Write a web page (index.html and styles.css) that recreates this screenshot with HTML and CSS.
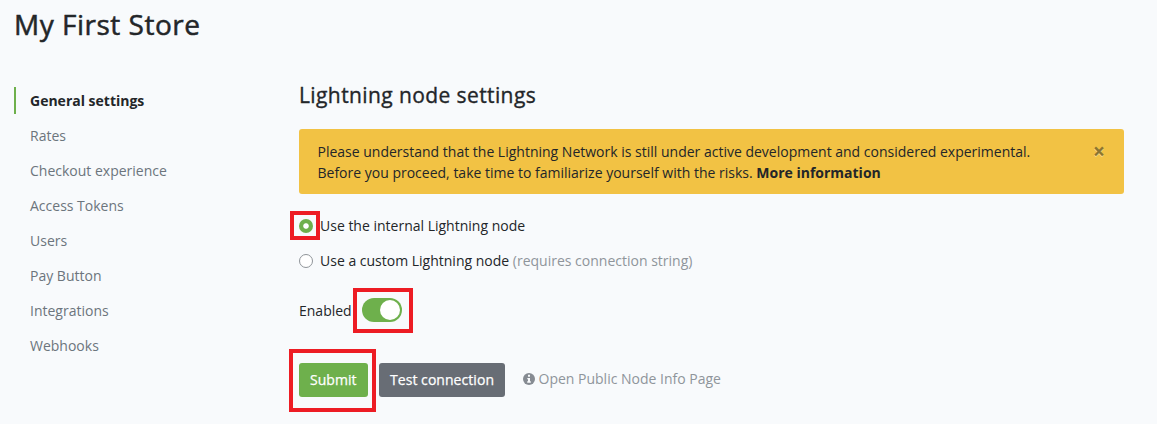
FILE: index.html
```html
<!DOCTYPE html>
<html lang="en">
<head>
<meta charset="utf-8">
<title>My First Store</title>
<link rel="stylesheet" href="styles.css">
</head>
<body>
<main class="page">
  <h1 class="title">My First Store</h1>
  <div class="columns">
    <nav class="nav">
      <a class="active">General settings</a>
      <a>Rates</a>
      <a>Checkout experience</a>
      <a>Access Tokens</a>
      <a>Users</a>
      <a>Pay Button</a>
      <a>Integrations</a>
      <a>Webhooks</a>
    </nav>
    <section class="content">
      <h2 class="subtitle">Lightning node settings</h2>
      <div class="alert">
        <p>Please understand that the Lightning Network is still under active development and considered experimental.<br>Before you proceed, take time to familiarize yourself with the risks. <b>More information</b></p>
        <span class="close">×</span>
      </div>
      <label class="option"><span class="radio checked"><span class="mark mark-radio"></span></span><span>Use the internal Lightning node</span></label>
      <label class="option"><span class="radio"></span><span>Use a custom Lightning node <span class="muted">(requires connection string)</span></span></label>
      <div class="enabled"><span>Enabled</span><span class="switch"><span class="mark mark-switch"></span></span></div>
      <div class="actions">
        <span class="btn submit">Submit<span class="mark mark-submit"></span></span>
        <span class="btn test">Test connection</span>
        <a class="info"><svg class="info-icon" viewBox="0 0 12 12"><circle cx="6" cy="6" r="6" fill="#868b92"/><path d="M5 1.800h2v2H5zM4.300 5H7v3.300h.8v1.400H4.200V8.300H5V6.300h-.7z" fill="#f8fafc"/></svg>Open Public Node Info Page</a>
      </div>
    </section>
  </div>
</main>
</body>
</html>
```
FILE: styles.css
```css
* { box-sizing: border-box; }
body { margin: 0; background: #f8fafc; color: #232629; font: 14px/21px "Open Sans", sans-serif; }
.page { height: 424px; padding: 8px 33px 0 14px; overflow: hidden; }
.title { margin: 0; font-size: 28px; line-height: 32px; font-weight: 400; letter-spacing: .5px; -webkit-text-stroke: .5px; }
.columns { display: flex; margin-top: 41px; }
.nav { width: 285px; flex: none; padding-top: 6px; }
.nav a { display: block; height: 27px; margin-bottom: 8px; padding: 3px 0 3px 16px; color: #6c757d; }
.nav .active { color: #232629; font-weight: 700; border-left: 2px solid #6eb04c; padding-left: 14px; }
.content { flex: 1; }
.subtitle { margin: 0 0 20px; font-size: 21px; line-height: 28px; font-weight: 400; letter-spacing: .4px; -webkit-text-stroke: .35px; }
.alert { display: flex; justify-content: space-between; height: 65px; padding: 12px 19px 0 18.500px; border-radius: 3px; background: #f2c244; }
.alert p { margin: 0; }
.close { font-size: 21px; font-weight: 700; color: #8c7532; text-shadow: 0 1px 0 #f9dd90; }
.option { display: flex; align-items: center; height: 21px; margin-top: 21px; }
.option + .option { margin-top: 14px; }
.radio { position: relative; width: 14px; height: 14px; margin-right: 7px; border: 1px solid #8f9499; border-radius: 50%; background: #fff; }
.radio.checked { border: 0; background: radial-gradient(circle, #fff 2.300px, #6eb04c 3.200px); }
.muted { color: #8f959b; }
.enabled { display: flex; align-items: center; height: 24px; margin-top: 27px; }
.switch { position: relative; width: 40px; height: 24px; margin-left: 10px; border-radius: 12px; background: #6eb04c; }
.switch::before { content: ""; display: block; width: 20px; height: 20px; margin: 2px 0 0 18px; border-radius: 50%; background: #fff; }
.actions { display: flex; margin-top: 41px; }
.btn { position: relative; height: 34px; padding: 6px 11px; border-radius: 3px; color: #fff; letter-spacing: .05px; -webkit-text-stroke: .25px; white-space: nowrap; }
.submit { width: 69px; background: #6eb04c; }
.test { width: 126px; margin-left: 11px; background: #686d75; }
.info { margin: 5px 0 0 18px; color: #8f959b; }
.info-icon { width: 12px; height: 12px; margin-right: 3.500px; vertical-align: -1px; }
.mark { position: absolute; border: 4px solid #ed1c24; }
.mark-radio { left: -9px; top: -8px; width: 30px; height: 29px; }
.mark-switch { left: -9px; top: -10px; width: 60px; height: 45px; }
.mark-submit { left: -10px; top: -14px; width: 87px; height: 63px; }
```
